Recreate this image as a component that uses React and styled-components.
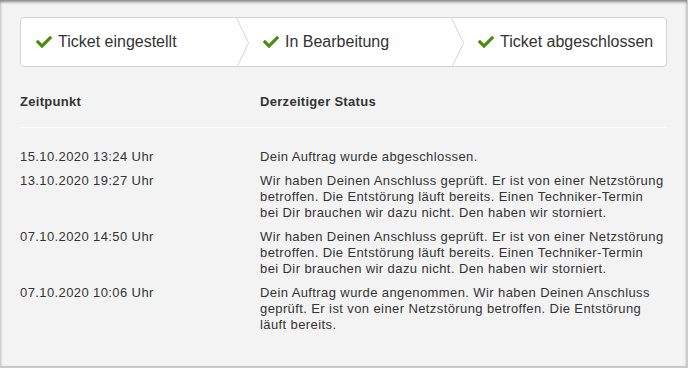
import React from "react";
import styled, { createGlobalStyle } from "styled-components";
import { FaCheck } from "react-icons/fa";

const GlobalStyle = createGlobalStyle`
  body {
    margin: 0;
    background: #fff;
    font-family: "Liberation Sans", Arial, sans-serif;
    color: #333;
  }
`;

const Panel = styled.div`
  box-sizing: border-box;
  width: 688px;
  height: 368px;
  padding: 17px 20px 0 20px;
  background: #f3f3f3;
  border-right: 1px solid #c9c9c9;
  border-bottom: 2px solid #c9c9c9;
  box-shadow: inset 0 2px 3px rgba(0, 0, 0, 0.45);
`;

const Stepper = styled.div`
  box-sizing: border-box;
  display: grid;
  grid-template-columns: repeat(3, 1fr);
  height: 50px;
  background: #fff;
  border: 1px solid #d4d4d4;
  border-radius: 4px;
`;

const Step = styled.div`
  display: flex;
  align-items: center;
  padding-left: ${(p) => (p.$first ? "15px" : "0")};
  font-size: 16px;
  color: #333;
  white-space: nowrap;
`;

const Chevron = styled.svg`
  flex: none;
  width: 13px;
  height: 48px;
  margin-right: 14px;
`;

const Check = styled(FaCheck)`
  flex: none;
  width: 16px;
  height: 16px;
  color: #4b8c0b;
  margin-right: 6px;
`;

const Table = styled.div`
  display: grid;
  grid-template-columns: 240px 1fr;
  font-size: 13px;
  letter-spacing: 0.4px;
  line-height: 16px;
  color: #333;
`;

const HeadCell = styled.div`
  font-weight: bold;
  letter-spacing: 0.3px;
  padding: 27px 0 17px;
  border-bottom: 1px solid #fff;
`;

const Body = styled.div`
  grid-column: 1 / -1;
  display: grid;
  grid-template-columns: 240px 1fr;
  row-gap: 8px;
  padding-top: 21px;
`;

const Cell = styled.div`
  white-space: nowrap;
`;

const Line = styled.div``;

const steps = ["Ticket eingestellt", "In Bearbeitung", "Ticket abgeschlossen"];

const storniert = [
  "Wir haben Deinen Anschluss geprüft. Er ist von einer Netzstörung",
  "betroffen. Die Entstörung läuft bereits. Einen Techniker-Termin",
  "bei Dir brauchen wir dazu nicht. Den haben wir storniert.",
];

const rows = [
  ["15.10.2020 13:24 Uhr", ["Dein Auftrag wurde abgeschlossen."]],
  ["13.10.2020 19:27 Uhr", storniert],
  ["07.10.2020 14:50 Uhr", storniert],
  [
    "07.10.2020 10:06 Uhr",
    [
      "Dein Auftrag wurde angenommen. Wir haben Deinen Anschluss",
      "geprüft. Er ist von einer Netzstörung betroffen. Die Entstörung",
      "läuft bereits.",
    ],
  ],
];

export default function App() {
  return (
    <>
      <GlobalStyle />
      <Panel>
        <Stepper>
          {steps.map((label, i) => (
            <Step key={label} $first={i === 0}>
              {i > 0 && (
                <Chevron viewBox="0 0 13 48">
                  <polyline
                    points="0.5,0 12.5,25 1.5,48"
                    fill="none"
                    stroke="#d4d4d4"
                    strokeWidth="1"
                  />
                </Chevron>
              )}
              <Check />
              {label}
            </Step>
          ))}
        </Stepper>
        <Table>
          <HeadCell>Zeitpunkt</HeadCell>
          <HeadCell>Derzeitiger Status</HeadCell>
          <Body>
            {rows.map(([time, lines]) => (
              <React.Fragment key={time + lines.length}>
                <Cell>{time}</Cell>
                <Cell>
                  {lines.map((l) => (
                    <Line key={l}>{l}</Line>
                  ))}
                </Cell>
              </React.Fragment>
            ))}
          </Body>
        </Table>
      </Panel>
    </>
  );
}
